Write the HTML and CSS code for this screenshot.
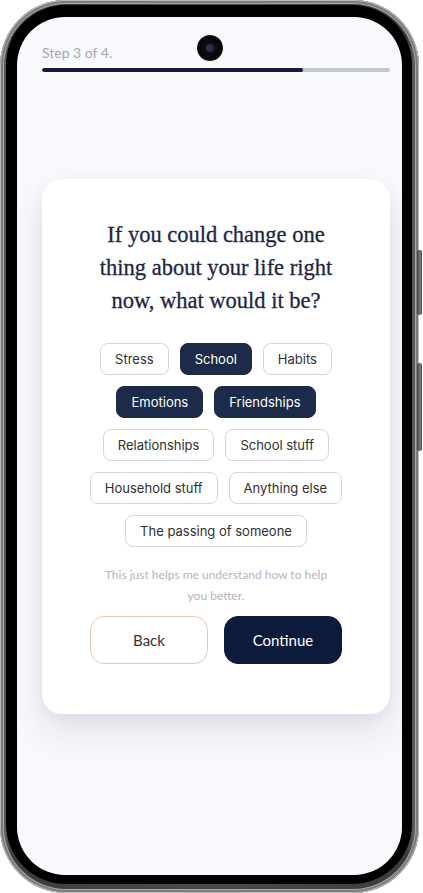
FILE: index.html
```html
<!DOCTYPE html>
<html lang="en">
<head>
<meta charset="utf-8">
<title>Step 3 of 4</title>
<link rel="stylesheet" href="styles.css">
</head>
<body>
<div class="phone">
  <span class="side-btn side-btn-1"></span>
  <span class="side-btn side-btn-2"></span>
  <div class="bezel">
    <div class="screen">
      <span class="camera"></span>
      <div class="progress-head">
        <div class="step-label">Step 3 of 4.</div>
        <div class="progress"><div class="progress-fill" style="width:75%"></div></div>
      </div>
      <div class="card">
        <h1 class="question">If you could change one<br>thing about your life right<br>now, what would it be?</h1>
        <div class="chips">
          <button class="chip">Stress</button>
          <button class="chip chip-on">School</button>
          <button class="chip">Habits</button>
          <button class="chip chip-on">Emotions</button>
          <button class="chip chip-on">Friendships</button>
          <button class="chip">Relationships</button>
          <button class="chip">School stuff</button>
          <button class="chip">Household stuff</button>
          <button class="chip">Anything else</button>
          <button class="chip">The passing of someone</button>
        </div>
        <p class="helper">This just helps me understand how to help<br>you better.</p>
        <div class="actions">
          <button class="btn btn-back">Back</button>
          <button class="btn btn-continue">Continue</button>
        </div>
      </div>
    </div>
  </div>
</div>
</body>
</html>
```
FILE: styles.css
```css
* { box-sizing: border-box; }
html, body { margin: 0; padding: 0; background: #ffffff; }
body { width: 423px; height: 893px; overflow: hidden; font-family: "Lato", "Noto Sans", sans-serif; }

.phone {
  position: relative;
  width: 419px;
  height: 893px;
  padding: 5px 7px 9px 6px;
  border-radius: 66px;
  background: linear-gradient(90deg, #6f6f6f 0%, #3c3c3c 3%, #4a4a4a 50%, #3c3c3c 97%, #6f6f6f 100%);
  box-shadow: inset 0 0 0 1px #b9b9b9, inset 0 0 0 3px #7c7c7c, inset 0 0 0 4px #a6a6a6;
}
.side-btn {
  position: absolute;
  right: -3px;
  width: 5px;
  border-radius: 2px;
  background: linear-gradient(90deg, #3d3d3d, #7a7a7a 60%, #4a4a4a);
}
.side-btn-1 { top: 250px; height: 65px; }
.side-btn-2 { top: 363px; height: 88px; }

.bezel {
  height: 100%;
  padding: 12px 10px 9px 11px;
  border-radius: 60px;
  background: #000000;
}
.screen {
  position: relative;
  height: 100%;
  border-radius: 48px;
  background: #f8f9fc;
  padding: 27px 12px 0 25px;
  overflow: hidden;
}
.camera {
  position: absolute;
  left: 180px;
  top: 18px;
  width: 26px;
  height: 26px;
  border-radius: 50%;
  background: radial-gradient(circle at 50% 50%, #2a2f4a 0 3px, #0d0d10 5px, #050505 11px, #1a1a1a 13px);
}

.progress-head { display: flex; flex-direction: column; gap: 7px; }
.step-label {
  font-size: 14px;
  line-height: 17px;
  color: #a4a8ae;
}
.progress {
  height: 4px;
  border-radius: 2px;
  background: #c3c6cf;
  overflow: hidden;
}
.progress-fill { height: 100%; background: #111d3b; border-radius: 2px; }

.card {
  margin-top: 107px;
  width: 348px;
  height: 535px;
  border-radius: 20px;
  background: #ffffff;
  box-shadow: 0 18px 36px rgba(20, 30, 60, 0.10), 0 4px 14px rgba(20, 30, 60, 0.05);
  padding: 39px 40px 0;
  display: flex;
  flex-direction: column;
  align-items: center;
}
.question {
  margin: 0;
  font-family: "Liberation Serif", "DejaVu Serif", serif;
  font-weight: normal;
  font-size: 22.5px;
  line-height: 33px;
  color: #1c2743;
  text-align: center;
  white-space: nowrap;
  -webkit-text-stroke: 0.3px #1c2743;
}
.chips {
  margin-top: 26px;
  width: 260px;
  display: flex;
  flex-wrap: wrap;
  justify-content: center;
  column-gap: 11px;
  row-gap: 11px;
}
.chip {
  height: 32px;
  padding: 0 14px;
  border: 1px solid #d3d5da;
  border-radius: 8px;
  background: #ffffff;
  font-family: "Inter", "Noto Sans", sans-serif;
  font-size: 13px;
  color: #2e2f33;
  cursor: pointer;
}
.chip-on {
  background: #1c2b49;
  border-color: #1c2b49;
  color: #ffffff;
}
.helper {
  margin: 17px 0 0;
  font-size: 12px;
  line-height: 21px;
  color: #b3b6bb;
  text-align: center;
}
.actions {
  margin-top: 10px;
  display: flex;
  gap: 16px;
}
.btn {
  width: 118px;
  height: 48px;
  border-radius: 14px;
  font-family: "Lato", "Noto Sans", sans-serif;
  font-size: 15px;
  cursor: pointer;
}
.btn-back {
  background: #ffffff;
  border: 1px solid #e7caa5;
  color: #333333;
}
.btn-continue {
  background: #0c1a3c;
  border: 1px solid #0c1a3c;
  color: #ffffff;
}
```
